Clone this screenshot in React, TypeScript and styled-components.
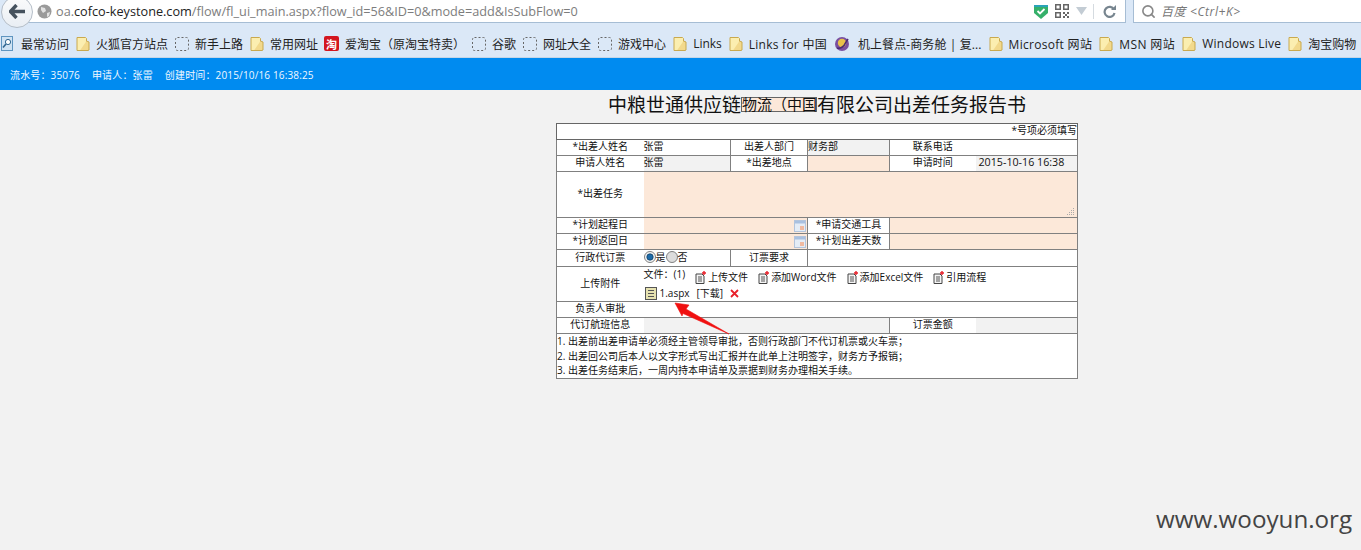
import styled, { createGlobalStyle } from "styled-components";
import { Search } from "lucide-react";

const cjk = `"Open Sans", "Noto Sans CJK SC", sans-serif`;
const peach = "#fce8d9";
const grey = "#f2f2f2";

const GlobalStyle = createGlobalStyle`
  html, body {
    margin: 0;
    padding: 0;
    background: ${grey};
    overflow: hidden;
  }
  * {
    box-sizing: border-box;
  }
`;

const FolderIcon = () => (
  <svg width="14" height="16" viewBox="0 0 14 16">
    <path d="M1 1.5h8.5l1 1V14.5H1z" fill="#fbeeb0" stroke="#c9a94f" />
    <path d="M10.5 5l2.5 1v8l-1 .5h-8" fill="#f2d98c" stroke="#c9a94f" />
  </svg>
);

const DashedIcon = () => (
  <svg width="14" height="14" viewBox="0 0 14 14">
    <rect x="0.5" y="0.5" width="13" height="13" rx="2" fill="none" stroke="#666" strokeDasharray="2 2" />
  </svg>
);

const RecentIcon = () => (
  <IconSlot $right={2}>
    <svg width="12" height="15" viewBox="0 0 12 15">
      <rect x="0.5" y="0.5" width="11" height="14" fill="#cfe2f3" stroke="#5f95c0" />
      <circle cx="7" cy="6" r="2.6" fill="#fff" stroke="#2f6690" />
      <path d="M5 8l-3 3.5" stroke="#2f6690" strokeWidth="1.6" />
    </svg>
  </IconSlot>
);

const TaobaoIcon = () => <TaoBadge>淘</TaoBadge>;

const PlaneIcon = () => (
  <IconSlot $right={2}>
    <svg width="16" height="16" viewBox="0 0 16 16">
      <circle cx="8" cy="8" r="7" fill="#7a4fa0" />
      <circle cx="8" cy="7" r="4.2" fill="#e8c04a" />
      <path d="M3 12c3 1 7-1 9-6l2-3" stroke="#4b2b70" strokeWidth="1.6" fill="none" />
    </svg>
  </IconSlot>
);

const bookmarks: { icon: React.ReactNode; label: string; spacing?: number }[] = [
  { icon: <RecentIcon />, label: "最常访问" },
  { icon: <FolderIcon />, label: "火狐官方站点" },
  { icon: <DashedIcon />, label: "新手上路" },
  { icon: <FolderIcon />, label: "常用网址" },
  { icon: <TaobaoIcon />, label: "爱淘宝（原淘宝特卖）" },
  { icon: <DashedIcon />, label: "谷歌" },
  { icon: <DashedIcon />, label: "网址大全" },
  { icon: <DashedIcon />, label: "游戏中心" },
  { icon: <FolderIcon />, label: "Links" },
  { icon: <FolderIcon />, label: "Links for 中国", spacing: 0.25 },
  { icon: <PlaneIcon />, label: "机上餐点-商务舱 | 复...", spacing: 0.1 },
  { icon: <FolderIcon />, label: "Microsoft 网站", spacing: 0.3 },
  { icon: <FolderIcon />, label: "MSN 网站", spacing: 0.4 },
  { icon: <FolderIcon />, label: "Windows Live", spacing: 0.25 },
  { icon: <FolderIcon />, label: "淘宝购物" },
];

const CalendarIcon = () => (
  <svg width="12" height="12" viewBox="0 0 12 12">
    <rect x="0.5" y="0.5" width="11" height="11" fill="#e4ecf6" stroke="#b3c4dc" />
    <rect x="1" y="1" width="10" height="2.5" fill="#a9c0e0" />
    <rect x="6" y="6" width="4" height="4" fill="#f0b9a0" />
  </svg>
);

const DocIcon = () => (
  <svg width="11" height="13" viewBox="0 0 11 13">
    <path d="M1 3h6l2 2v7.5H1z" fill="#f4f4f4" stroke="#444" />
    <path d="M3 6h4M3 8h4M3 10h4" stroke="#555" />
    <path d="M9 0v4M7 2h4" stroke="#e8202a" strokeWidth="1.4" />
  </svg>
);

const Radio = ({ checked }: { checked?: boolean }) => (
  <svg width="12" height="12" viewBox="0 0 12 12">
    <circle cx="6" cy="6" r="5.5" fill={checked ? "#f4f4f4" : "#dcdcdc"} stroke="#808080" />
    {checked && <circle cx="6" cy="6" r="3.2" fill="#1c6aa8" stroke="#0f3f66" strokeWidth="0.8" />}
  </svg>
);

const AttachmentIcon = () => (
  <svg width="12" height="13" viewBox="0 0 12 13">
    <rect x="0.5" y="0.5" width="11" height="12" fill="#e6e2b0" stroke="#555" />
    <path d="M3 3.5h6M3 6.5h6M3 9.5h6" stroke="#555" />
  </svg>
);

const App = () => {
  return (
    <>
      <GlobalStyle />
      <Browser>
        <Toolbar>
          <BackButton>
            <svg width="16" height="15" viewBox="0 0 16 15">
              <path d="M7.5 1L1.5 7.5l6 6.5M2 7.5h14" fill="none" stroke="#46525e" strokeWidth="3.4" />
            </svg>
          </BackButton>
          <UrlBar>
            <svg width="15" height="15" viewBox="0 0 15 15">
              <circle cx="7.5" cy="7.5" r="7" fill="#9a9a9a" />
              <path d="M4 3l4 1 1 3-3 2-2-3zM10 9l3-1-1 4-2 1z" fill="#e2e2e2" />
            </svg>
            <UrlText>
              oa.<b>cofco-keystone.com</b>/flow/fl_ui_main.aspx?flow_id=56&amp;ID=0&amp;mode=add&amp;IsSubFlow=0
            </UrlText>
            <UrlTools>
              <svg width="14" height="15" viewBox="0 0 14 15">
                <path d="M0 1h14v8l-7 6-7-6z" fill="#35b06a" />
                <path d="M0 1h14v2H0z" fill="#2aa3b8" />
                <path d="M3.5 7l2.5 2.5L10.5 5" fill="none" stroke="#fff" strokeWidth="1.8" />
              </svg>
              <svg width="14" height="14" viewBox="0 0 14 14" fill="#666">
                <path d="M0 0h6v6H0zM1.5 1.5v3h3v-3zM8 0h6v6H8zM9.5 1.5v3h3v-3zM0 8h6v6H0zM1.5 9.5v3h3v-3z" fillRule="evenodd" />
                <path d="M8 8h2v2H8zM12 8h2v2h-2zM10 10h2v2h-2zM8 12h2v2H8zM12 12h2v2h-2z" />
              </svg>
              <svg width="11" height="8" viewBox="0 0 11 8">
                <path d="M0 0h11L5.5 8z" fill="#c3ccd4" />
              </svg>
              <ToolDivider />
              <svg width="13" height="13" viewBox="0 0 13 13">
                <path d="M11 4.5A5 5 0 1 0 11.5 8" fill="none" stroke="#77858f" strokeWidth="2.2" />
                <path d="M8 5h5V0z" fill="#77858f" />
              </svg>
            </UrlTools>
          </UrlBar>
          <SearchBar>
            <Search size={15} color="#888" strokeWidth={2.6} />
            <SearchText>百度 &lt;Ctrl+K&gt;</SearchText>
          </SearchBar>
        </Toolbar>
        <BookmarkBar>
          {bookmarks.map((b, i) => (
            <Bookmark key={i}>
              {b.icon}
              <BookmarkLabel $spacing={b.spacing}>{b.label}</BookmarkLabel>
            </Bookmark>
          ))}
        </BookmarkBar>
      </Browser>

      <InfoBar>
        <span>流水号：35076</span>
        <span>申请人：张雷</span>
        <span>创建时间：2015/10/16 16:38:25</span>
      </InfoBar>

      <Page>
        <Form>
          <Title>
            中粮世通供应链<TitlePatch>物流（中国</TitlePatch>有限公司出差任务报告书
          </Title>
          <Sheet>
            <colgroup>
              <col width="87" />
              <col width="87" />
              <col width="77" />
              <col width="82" />
              <col width="86" />
              <col width="102" />
            </colgroup>
            <tbody>
              <Row $h={16}>
                <NoteCell colSpan={6}>*号项必须填写</NoteCell>
              </Row>
              <Row $h={16}>
                <Label $open>*出差人姓名</Label>
                <Value $open>张雷</Value>
                <Label>出差人部门</Label>
                <Value $bg={grey}>财务部</Value>
                <Label $open>联系电话</Label>
                <Value $open />
              </Row>
              <Row $h={16}>
                <Label $open>申请人姓名</Label>
                <Value $open $bg={grey}>张雷</Value>
                <Label>*出差地点</Label>
                <Value $bg={peach} />
                <Label $open>申请时间</Label>
                <DateValue>2015-10-16 16:38</DateValue>
              </Row>
              <Row $h={46}>
                <Label $open>*出差任务</Label>
                <GripCell colSpan={5}>
                  <Grip viewBox="0 0 8 7" width="8" height="7">
                    <path d="M6 0h1v1H6zM4 2h1v1H4zM6 2h1v1H6zM2 4h1v1H2zM4 4h1v1H4zM6 4h1v1H6zM0 6h1v1H0zM2 6h1v1H2zM4 6h1v1H4zM6 6h1v1H6z" fill="#aaa" />
                  </Grip>
                </GripCell>
              </Row>
              <Row $h={16}>
                <Label $open>*计划起程日</Label>
                <DateCell colSpan={2}>
                  <CalendarIcon />
                </DateCell>
                <Label>*申请交通工具</Label>
                <Value $bg={peach} colSpan={2} />
              </Row>
              <Row $h={16}>
                <Label $open>*计划返回日</Label>
                <DateCell colSpan={2}>
                  <CalendarIcon />
                </DateCell>
                <Label>*计划出差天数</Label>
                <Value $bg={peach} colSpan={2} />
              </Row>
              <Row $h={17}>
                <Label $open>行政代订票</Label>
                <Value $open>
                  <RadioGroup>
                    <Radio checked />
                    <span>是</span>
                    <Radio />
                    <span>否</span>
                  </RadioGroup>
                </Value>
                <Label>订票要求</Label>
                <Value colSpan={3} />
              </Row>
              <Row $h={35}>
                <Label $open>上传附件</Label>
                <UploadCell $open colSpan={5}>
                  <UploadRow>
                    <FileCount>文件：(1)</FileCount>
                    <UploadLink><DocIcon />上传文件</UploadLink>
                    <UploadLink><DocIcon />添加Word文件</UploadLink>
                    <UploadLink><DocIcon />添加Excel文件</UploadLink>
                    <UploadLink><DocIcon />引用流程</UploadLink>
                  </UploadRow>
                  <FileRow>
                    <AttachmentIcon />
                    <FileName>1.aspx</FileName>
                    <span>[下载]</span>
                    <svg width="9" height="9" viewBox="0 0 9 9">
                      <path d="M1 1l7 7M8 1L1 8" stroke="#e8202a" strokeWidth="1.8" />
                    </svg>
                  </FileRow>
                </UploadCell>
              </Row>
              <Row $h={16}>
                <Label $open>负责人审批</Label>
                <Value $open colSpan={5} />
              </Row>
              <Row $h={16}>
                <Label $open>代订航班信息</Label>
                <Value $open $bg={grey} colSpan={3} />
                <Label $open>订票金额</Label>
                <Value $open $bg={grey} />
              </Row>
              <Row $h={44}>
                <NotesCell colSpan={6}>
                  <div>1. 出差前出差申请单必须经主管领导审批，否则行政部门不代订机票或火车票；</div>
                  <div>2. 出差回公司后本人以文字形式写出汇报并在此单上注明签字，财务方予报销；</div>
                  <div>3. 出差任务结束后，一周内持本申请单及票据到财务办理相关手续。</div>
                </NotesCell>
              </Row>
            </tbody>
          </Sheet>
        </Form>
        <Arrow width="60" height="36" viewBox="0 0 60 36">
          <path d="M1 2L15 4 12 8 55 33 9 12.5 8 15z" fill="#f01010" stroke="#f01010" strokeWidth="0.6" strokeLinejoin="round" />
        </Arrow>
      </Page>

      <Watermark>www.wooyun.org</Watermark>
    </>
  );
};

const IconSlot = styled.span<{ $right: number }>`
  display: flex;
  margin-right: ${(p) => p.$right}px;
`;

const TaoBadge = styled.span`
  display: flex;
  align-items: center;
  justify-content: center;
  width: 15px;
  height: 15px;
  margin-left: -1px;
  background: #d3161f;
  border-radius: 2px;
  color: #fff;
  font-size: 11px;
  font-weight: 700;
`;

const Browser = styled.div`
  background: #dbe8f7;
  font-family: ${cjk};
  color: #222;
`;

const Toolbar = styled.div`
  display: flex;
  align-items: center;
  gap: 7px;
  height: 23px;
`;

const BackButton = styled.div`
  position: relative;
  z-index: 1;
  flex: none;
  display: flex;
  align-items: center;
  justify-content: center;
  width: 32px;
  height: 32px;
  margin-left: 1px;
  margin-right: -33px;
  border: 1px solid #b5bec8;
  border-radius: 50%;
  background: linear-gradient(#fbfbfb, #e9eef4);
`;

const UrlBar = styled.div`
  flex: 1;
  display: flex;
  align-items: center;
  height: 23px;
  padding: 0 9px 0 30px;
  background: #fff;
  border-right: 1px solid #a6bdd4;
  border-bottom: 1px solid #a6bdd4;
`;

const UrlText = styled.div`
  flex: 1;
  margin-left: 4px;
  font-size: 12.7px;
  color: #7d7d7d;
  white-space: nowrap;

  b {
    font-weight: 400;
    color: #222;
  }
`;

const UrlTools = styled.div`
  display: flex;
  align-items: center;
  gap: 7px;
`;

const ToolDivider = styled.div`
  width: 1px;
  height: 15px;
  margin: 0 2px 0 -1px;
  background: #d5dbe0;
`;

const SearchBar = styled.div`
  display: flex;
  align-items: center;
  gap: 5px;
  width: 228px;
  height: 23px;
  padding-left: 7px;
  background: #fff;
  border-left: 1px solid #a6bdd4;
  border-bottom: 1px solid #a6bdd4;
`;

const SearchText = styled.span`
  font-size: 12px;
  font-style: italic;
  letter-spacing: 0.6px;
  color: #777;
`;

const BookmarkBar = styled.div`
  display: flex;
  align-items: center;
  gap: 7px;
  height: 35px;
  padding-left: 1px;
  padding-top: 7px;
  border-bottom: 1px solid #c4d6e8;
  overflow: hidden;
  white-space: nowrap;
  font-size: 12px;
`;

const Bookmark = styled.div`
  flex: none;
  display: flex;
  align-items: center;
  gap: 6px;
`;

const BookmarkLabel = styled.span<{ $spacing?: number }>`
  letter-spacing: ${(p) => p.$spacing || 0}px;
`;

const InfoBar = styled.div`
  display: flex;
  align-items: center;
  gap: 12px;
  height: 32px;
  padding-left: 10px;
  background: #008bf0;
  color: #f2f8ff;
  font-family: ${cjk};
  font-size: 10px;
  letter-spacing: 0.15px;
`;

const Page = styled.div`
  position: relative;
  padding-left: 556px;
  font-family: ${cjk};
`;

const Form = styled.div`
  width: 522px;
`;

const Title = styled.div`
  display: flex;
  align-items: center;
  justify-content: center;
  height: 33px;
  padding-bottom: 5px;
  font-size: 19px;
  color: #111;
  white-space: nowrap;
`;

const TitlePatch = styled.span`
  display: block;
  width: 76px;
  height: 15px;
  line-height: 13px;
  font-size: 15px;
  background: ${peach};
  border: 1px solid #666;
`;

const Sheet = styled.table`
  width: 521px;
  table-layout: fixed;
  border-collapse: collapse;
  border: 1px solid #666;
  background: #fff;
  font-size: 10px;
  color: #111;
`;

const Row = styled.tr<{ $h: number }>`
  height: ${(p) => p.$h}px;
`;

const Label = styled.td<{ $open?: boolean }>`
  padding: 0 0 2px;
  border: 1px solid #808080;
  ${(p) => p.$open && "border-right: none;"}
  text-align: center;
  line-height: 11px;
`;

const Value = styled.td<{ $bg?: string; $open?: boolean }>`
  padding: 0 0 2px;
  border: 1px solid #808080;
  ${(p) => p.$open && "border-left: none;"}
  background: ${(p) => p.$bg || "#fff"};
  line-height: 11px;
`;

const UploadCell = styled(Value)`
  padding: 0;
`;

const NoteCell = styled.td`
  padding: 0 0 2px;
  border: 1px solid #666;
  text-align: right;
  line-height: 11px;
`;

const DateValue = styled.td`
  padding: 0 0 2px 3px;
  border: 1px solid #808080;
  border-left: none;
  background: ${grey};
  font-size: 10.7px;
  line-height: 11px;
  white-space: nowrap;
`;

const GripCell = styled.td`
  position: relative;
  padding: 0;
  border: 1px solid #808080;
  border-left: none;
  background: ${peach};
`;

const Grip = styled.svg`
  position: absolute;
  right: 2px;
  bottom: 2px;
`;

const DateCell = styled.td`
  padding: 0 1px 0 0;
  border: 1px solid #808080;
  border-left: none;
  background: ${peach};
  text-align: right;
  line-height: 0;
`;

const RadioGroup = styled.div`
  display: flex;
  align-items: center;
  height: 13px;
  font-size: 10px;
`;

const UploadRow = styled.div`
  display: flex;
  align-items: center;
  gap: 10px;
  height: 19px;
  padding-top: 1px;
`;

const FileCount = styled.span`
  margin-top: -6px;
`;

const UploadLink = styled.span`
  display: flex;
  align-items: center;
  gap: 2px;
`;

const FileRow = styled.div`
  display: flex;
  align-items: center;
  gap: 7px;
  height: 15px;
  padding-left: 1px;
`;

const FileName = styled.span`
  margin-left: -4px;
`;

const NotesCell = styled.td`
  padding: 0;
  border: 1px solid #808080;
  line-height: 14.5px;
  vertical-align: top;
  white-space: nowrap;
`;

const Arrow = styled.svg`
  position: absolute;
  left: 674px;
  top: 211px;
`;

const Watermark = styled.div`
  position: absolute;
  left: 1156px;
  top: 502px;
  font-family: "Open Sans", sans-serif;
  font-size: 24.2px;
  color: #444;
`;

export default App;
